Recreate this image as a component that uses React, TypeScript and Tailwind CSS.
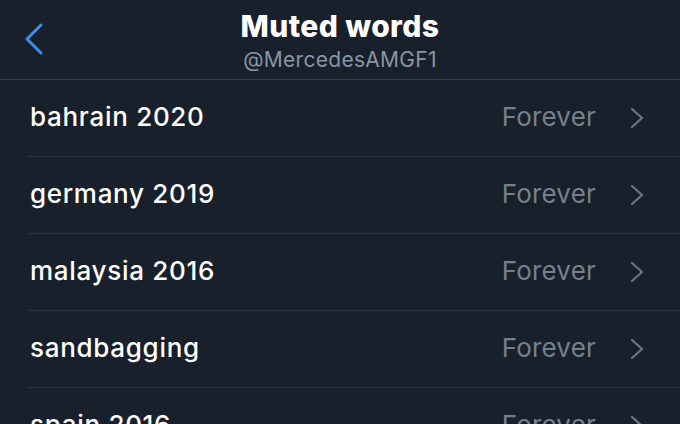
const words = ["bahrain 2020", "germany 2019", "malaysia 2016", "sandbagging", "spain 2016"];

function Chevron({ className }: { className?: string }) {
  return (
    <svg viewBox="0 0 14 22" className={className} fill="none" stroke="currentColor" strokeWidth={2.2} strokeLinecap="round" strokeLinejoin="round">
      <path d="M2 2l10 9-10 9" />
    </svg>
  );
}

export default function App() {
  return (
    <div className="h-[424px] w-[680px] overflow-hidden bg-[#18202b] font-['Inter',sans-serif] text-white">
      <header className="relative flex h-[80px] flex-col items-center border-b border-[#38404d] pt-[7px]">
        <button type="button" className="absolute left-[24px] top-[23px] text-[#3d8ee6]">
          <svg viewBox="0 0 20 32" className="h-[32px] w-[20px]" fill="none" stroke="currentColor" strokeWidth={3} strokeLinecap="round" strokeLinejoin="round">
            <path d="M17 2L3 16l14 14" />
          </svg>
        </button>
        <h1 className="text-[30px] font-extrabold leading-[38px] tracking-[0.4px]">Muted words</h1>
        <p className="mt-[1px] text-[21px] leading-[28px] tracking-[0.3px] text-[#8b95a3]">@MercedesAMGF1</p>
      </header>
      <ul>
        {words.map((w) => (
          <li key={w} className="ml-[28px] flex h-[77px] items-center border-b border-[#2b3340] pb-[3px] pr-[36px]">
            <span className="pl-[2px] text-[26px] font-medium tracking-[0.7px]">{w}</span>
            <span className="ml-auto text-[26px] tracking-[0.2px] text-[#76808d]">Forever</span>
            <Chevron className="ml-[34px] mt-[3px] h-[22px] w-[14px] text-[#6c7683]" />
          </li>
        ))}
      </ul>
    </div>
  );
}
